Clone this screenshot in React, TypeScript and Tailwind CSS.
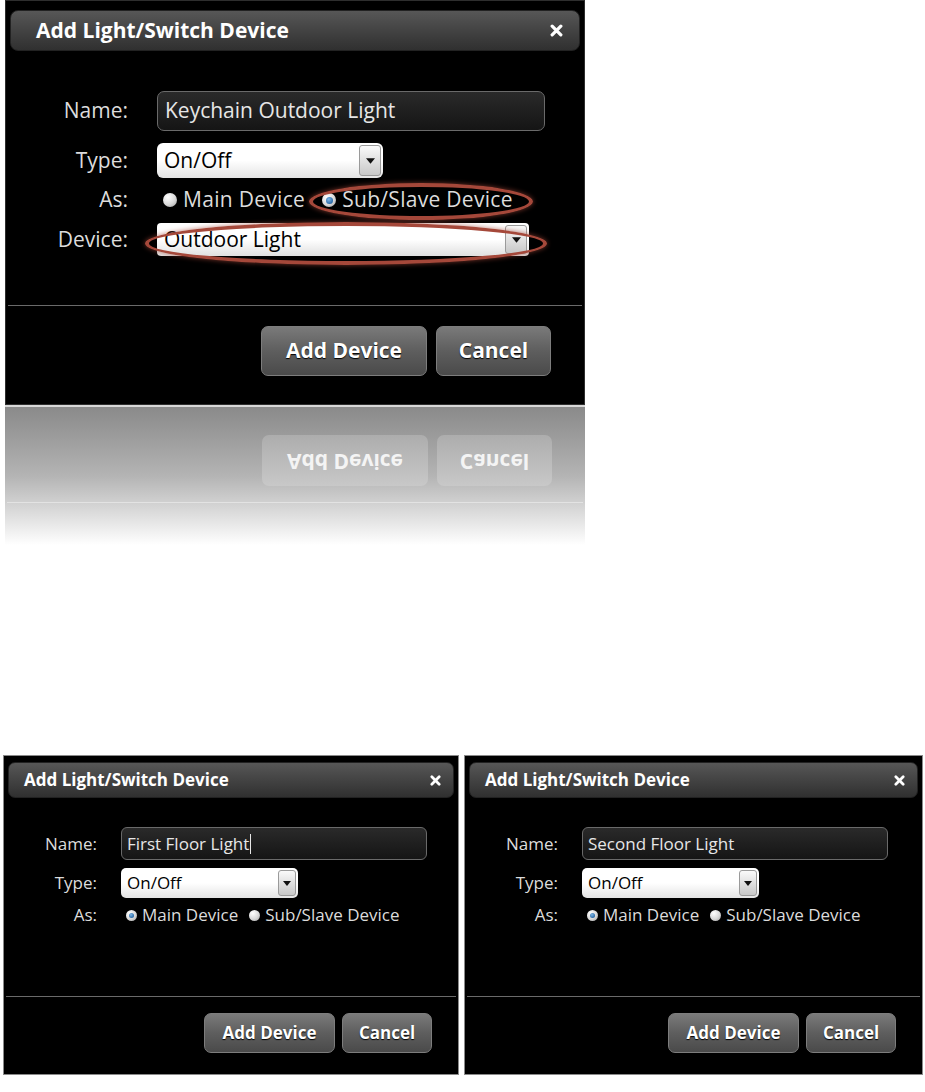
import React from "react";

const FONT = { fontFamily: "'Open Sans', 'Noto Sans', sans-serif" };

function XIcon({ size }: { size: number }) {
  return (
    <svg width={size} height={size} viewBox="0 0 12 12">
      <path d="M2 2 L10 10 M10 2 L2 10" stroke="white" strokeWidth="3" strokeLinecap="round" />
    </svg>
  );
}

function Radio({ checked, big }: { checked: boolean; big?: boolean }) {
  return (
    <span
      className={
        (big ? "w-[14px] h-[14px] " : "w-[11px] h-[11px] ") +
        "inline-flex items-center justify-center rounded-full shrink-0 bg-[radial-gradient(circle_at_35%_30%,#ffffff,#d8d8d8_55%,#9a9a9a)]"
      }
    >
      {checked && (
        <span
          className={
            (big ? "w-[7px] h-[7px] " : "w-[5px] h-[5px] ") +
            "rounded-full bg-[radial-gradient(circle_at_40%_35%,#7fb6e6,#2a6aa8_70%,#1c4d80)]"
          }
        />
      )}
    </span>
  );
}

function Arrow({ big }: { big?: boolean }) {
  return (
    <span
      className={
        (big ? "w-[22px] " : "w-[18px] ") +
        "h-full flex items-center justify-center border border-[#9a9a9a] rounded-[3px] bg-gradient-to-b from-[#fafafa] to-[#c8c8c8]"
      }
    >
      <svg width={big ? 9 : 8} height={big ? 6 : 5} viewBox="0 0 8 5">
        <path d="M0 0 L8 0 L4 5 Z" fill="#111" />
      </svg>
    </span>
  );
}

function Btn({ children, cls }: { children: React.ReactNode; cls: string }) {
  return (
    <div
      className={
        cls +
        " flex items-center justify-center rounded-[7px] border border-[#7d7d7d] bg-gradient-to-b from-[#7a7a7a] via-[#5e5e5e] to-[#4a4a4a] text-white font-bold [text-shadow:0_1px_1px_#000]"
      }
    >
      {children}
    </div>
  );
}

function TopDialog() {
  return (
    <div className="relative ml-[5px] w-[580px] h-[405px] bg-black border border-[#2e2e2e] flex flex-col">
      <div className="mx-[4px] mt-[9px] h-[41px] rounded-[8px] bg-gradient-to-b from-[#575757] to-[#303030] border border-[#222] flex items-center justify-between pl-[25px] pr-[16px]">
        <span className="text-white font-bold text-[21px]">Add Light/Switch Device</span>
        <XIcon size={13} />
      </div>
      <div className="mt-[40px] flex flex-col text-[21px] text-[#dcdcdc]">
        <div className="flex items-center h-[40px]">
          <span className="w-[122px] text-right">Name:</span>
          <div className="ml-[29px] w-[388px] h-full rounded-[7px] border border-[#6a6a6a] bg-gradient-to-b from-[#2a2a2a] to-[#151515] flex items-center pl-[7px] text-[21px] text-[#e6e6e6]">
            Keychain Outdoor Light
          </div>
        </div>
        <div className="flex items-center h-[35px] mt-[12px]">
          <span className="w-[122px] text-right">Type:</span>
          <div className="ml-[29px] w-[226px] h-full rounded-[6px] bg-gradient-to-b from-white via-white to-[#e4e4e4] flex items-center justify-between pl-[7px] pr-[2px] py-[2px] text-[21px] text-black">
            <span>On/Off</span>
            <Arrow big />
          </div>
        </div>
        <div className="flex items-center h-[44px]">
          <span className="w-[122px] text-right">As:</span>
          <div className="ml-[35px] flex items-center gap-[6px] tracking-[0.3px]">
            <Radio checked={false} big />
            <span>Main Device</span>
            <span className="ml-[5px]" />
            <Radio checked big />
            <span>Sub/Slave Device</span>
          </div>
        </div>
        <div className="flex items-center h-[33px] mt-[1px]">
          <span className="w-[122px] text-right">Device:</span>
          <div className="ml-[29px] w-[372px] h-full rounded-[4px] bg-gradient-to-b from-white via-white to-[#e0e0e0] flex items-center justify-between pl-[7px] pr-[2px] py-[2px] text-[21px] text-black">
            <span>Outdoor Light</span>
            <Arrow big />
          </div>
        </div>
      </div>
      <div className="mt-auto h-[99px] mx-[2px] border-t border-[#6a6a6a] flex justify-end items-start pt-[20px] pr-[31px] gap-[9px] text-[21px]">
        <Btn cls="w-[166px] h-[50px]">Add Device</Btn>
        <Btn cls="w-[115px] h-[50px]">Cancel</Btn>
      </div>
      <div className="absolute left-[303px] top-[182px] w-[224px] h-[37px] rounded-[50%] border-[4px] border-[#a5483a] shadow-[0_0_5px_rgba(165,72,58,0.7)]" />
      <div className="absolute left-[139px] top-[221px] w-[402px] h-[43px] rounded-[50%] border-[4px] border-[#a5483a] shadow-[0_0_5px_rgba(165,72,58,0.7)]" />
    </div>
  );
}

function Reflection() {
  return (
    <div className="ml-[5px] w-[580px] h-[140px] border-t-2 border-[#d8d8d8] bg-gradient-to-b from-[#8a8a8a] via-[#b4b4b4] to-white flex flex-col">
      <div className="flex justify-end pt-[28px] pr-[33px] gap-[9px] text-[21px]">
        <div className="w-[166px] h-[51px] rounded-[7px] bg-gradient-to-b from-[#adadad] to-[#c8c8c8] flex items-center justify-center text-[#f4f4f4] font-bold">
          <span className="scale-y-[-1] inline-block">Add Device</span>
        </div>
        <div className="w-[115px] h-[51px] rounded-[7px] bg-gradient-to-b from-[#adadad] to-[#c8c8c8] flex items-center justify-center text-[#f4f4f4] font-bold">
          <span className="scale-y-[-1] inline-block">Cancel</span>
        </div>
      </div>
      <div className="mt-[16px] mx-[2px] h-px bg-white/40" />
    </div>
  );
}

function SmallDialog({ name, cursor, cls }: { name: string; cursor?: boolean; cls: string }) {
  return (
    <div className={cls + " h-[320px] bg-black border border-[#8a8a8a] flex flex-col"}>
      <div className="mx-[4px] mt-[6px] h-[36px] rounded-[7px] bg-gradient-to-b from-[#575757] to-[#303030] border border-[#222] flex items-center justify-between pl-[15px] pr-[12px]">
        <span className="text-white font-bold text-[17px]">Add Light/Switch Device</span>
        <XIcon size={11} />
      </div>
      <div className="mt-[29px] flex flex-col text-[17px] text-[#dcdcdc]">
        <div className="flex items-center h-[33px]">
          <span className="w-[93px] text-right">Name:</span>
          <div className="ml-[24px] w-[306px] h-full rounded-[6px] border border-[#6a6a6a] bg-gradient-to-b from-[#2a2a2a] to-[#151515] flex items-center pl-[5px] text-[17px] text-[#e6e6e6]">
            {name}
            {cursor && <span className="ml-[1px] w-px h-[20px] bg-[#e6e6e6]" />}
          </div>
        </div>
        <div className="flex items-center h-[30px] mt-[8px]">
          <span className="w-[93px] text-right">Type:</span>
          <div className="ml-[24px] w-[177px] h-full rounded-[5px] bg-gradient-to-b from-white via-white to-[#e4e4e4] flex items-center justify-between pl-[6px] pr-[2px] py-[2px] text-[17px] text-black">
            <span>On/Off</span>
            <Arrow />
          </div>
        </div>
        <div className="flex items-center h-[34px]">
          <span className="w-[93px] text-right">As:</span>
          <div className="ml-[29px] flex items-center gap-[5px]">
            <Radio checked />
            <span>Main Device</span>
            <span className="ml-[1px]" />
            <Radio checked={false} />
            <span>Sub/Slave Device</span>
          </div>
        </div>
      </div>
      <div className="mt-auto h-[78px] mx-[2px] border-t border-[#6a6a6a] flex justify-end items-start pt-[16px] pr-[24px] gap-[7px] text-[17px]">
        <Btn cls="w-[131px] h-[40px]">Add Device</Btn>
        <Btn cls="w-[90px] h-[40px]">Cancel</Btn>
      </div>
    </div>
  );
}

export default function App() {
  return (
    <div className="w-[925px] h-[1092px] bg-white overflow-hidden" style={FONT}>
      <TopDialog />
      <Reflection />
      <div className="mt-[210px] flex">
        <SmallDialog cls="ml-[3px] w-[456px]" name="First Floor Light" cursor />
        <SmallDialog cls="ml-[5px] w-[459px]" name="Second Floor Light" />
      </div>
    </div>
  );
}
